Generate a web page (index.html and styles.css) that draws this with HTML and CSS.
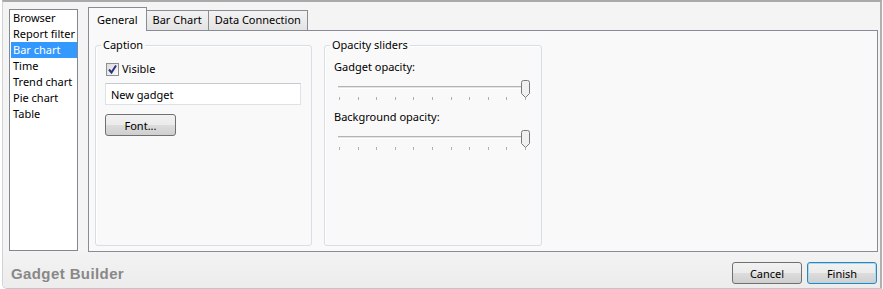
FILE: index.html
```html
<!DOCTYPE html>
<html lang="en">
<head>
    <meta charset="UTF-8">
    <title>Gadget Builder</title>
    <link rel="stylesheet" href="styles.css">
</head>
<body>
    <div class="window">
        <div class="main">
            <ul class="gadget-list">
                <li>Browser</li>
                <li>Report filter</li>
                <li class="selected">Bar chart</li>
                <li>Time</li>
                <li>Trend chart</li>
                <li>Pie chart</li>
                <li>Table</li>
            </ul>
            <div class="tab-control">
                <div class="tabs">
                    <div class="tab active">General</div>
                    <div class="tab">Bar Chart</div>
                    <div class="tab">Data Connection</div>
                </div>
                <div class="tab-panel">
                    <fieldset class="group caption-group">
                        <legend>Caption</legend>
                        <label class="check">
                            <span class="check-box">
                                <svg width="11" height="11" viewBox="0 0 11 11"><path d="M2 5.5 L4.5 8.5 L9 1.5" fill="none" stroke="#2f3480" stroke-width="2"/></svg>
                            </span>
                            Visible
                        </label>
                        <input class="text-input" type="text" value="New gadget">
                        <button class="btn font-btn">Font...</button>
                    </fieldset>
                    <fieldset class="group opacity-group">
                        <legend>Opacity sliders</legend>
                        <div class="slider-label">Gadget opacity:</div>
                        <div class="slider">
                            <div class="track"></div>
                            <div class="ticks">
                                <i></i><i></i><i></i><i></i><i></i><i></i><i></i><i></i><i></i><i></i><i></i>
                            </div>
                            <svg class="thumb" width="9" height="18" viewBox="0 0 9 18"><path d="M0.5 2.5 Q0.5 0.5 2.5 0.5 H6.5 Q8.5 0.5 8.5 2.5 V13.5 L4.5 17.5 L0.5 13.5 Z" fill="#f0f0f0" stroke="#7a7a7a"/></svg>
                        </div>
                        <div class="slider-label">Background opacity:</div>
                        <div class="slider">
                            <div class="track"></div>
                            <div class="ticks">
                                <i></i><i></i><i></i><i></i><i></i><i></i><i></i><i></i><i></i><i></i><i></i>
                            </div>
                            <svg class="thumb" width="9" height="18" viewBox="0 0 9 18"><path d="M0.5 2.5 Q0.5 0.5 2.5 0.5 H6.5 Q8.5 0.5 8.5 2.5 V13.5 L4.5 17.5 L0.5 13.5 Z" fill="#f0f0f0" stroke="#7a7a7a"/></svg>
                        </div>
                    </fieldset>
                </div>
            </div>
        </div>
        <div class="footer">
            <span class="title">Gadget Builder</span>
            <button class="btn">Cancel</button>
            <button class="btn default">Finish</button>
        </div>
    </div>
</body>
</html>
```

FILE: styles.css
```css
* {
    margin: 0;
    padding: 0;
    box-sizing: border-box;
}
body {
    background: #ffffff;
    font-family: "Noto Sans", sans-serif;
    font-size: 11px;
    line-height: 16px;
    color: #000;
}
.window {
    margin-left: 2px;
    width: 880px;
    height: 289px;
    background: #f4f4f4;
    border-top: 2px solid #a9a9a9;
    border-right: 2px solid #b0b0b0;
    border-left: 1px solid #d2d2d2;
    border-bottom: 1px solid #c4c4c4;
    border-bottom-left-radius: 5px;
    display: flex;
    flex-direction: column;
}
.main {
    display: flex;
    gap: 10px;
    padding: 5px 2px 0 6px;
    height: 250px;
}
.gadget-list {
    list-style: none;
    width: 69px;
    height: 242px;
    margin-top: 2px;
    background: white;
    border: 1px solid #828790;
}
.gadget-list li {
    margin-left: 1px;
    padding-left: 2px;
    height: 16px;
    white-space: nowrap;
}
.gadget-list li.selected {
    background: #3399ff;
    color: white;
}
.tab-control {
    flex: 1;
    display: flex;
    flex-direction: column;
}
.tabs {
    display: flex;
    align-items: flex-end;
    height: 23px;
}
.tab {
    height: 20px;
    padding: 1px 6px 0;
    border: 1px solid #898c95;
    border-bottom: none;
    background: linear-gradient(#f3f3f3, #e3e3e3);
    margin-left: -1px;
    white-space: nowrap;
}
.tab.active {
    height: 24px;
    margin-left: 0;
    margin-bottom: -1px;
    padding: 4px 8px 0 8px;
    background: #f9f9f9;
    position: relative;
    z-index: 1;
}
.tab-panel {
    height: 222px;
    border: 1px solid #898c95;
    background: #f9f9f9;
    display: flex;
    gap: 12px;
    padding: 6px 0 5px 6px;
}
.group {
    border: 1px solid #d5dfe5;
    border-radius: 3px;
    padding: 6px 8px 0 8px;
    box-shadow: inset 1px 1px 0 #ffffff;
    height: 209px;
}
.group legend {
    padding: 0 2px;
    margin-left: -3px;
}
.caption-group {
    width: 217px;
}
.opacity-group {
    width: 218px;
}
.check {
    display: flex;
    align-items: center;
    gap: 3px;
    margin: 2px 0 0 2px;
    height: 16px;
}
.check-box {
    width: 13px;
    height: 13px;
    border: 1px solid #8e8f8f;
    background: linear-gradient(135deg, #dcdcdc, #fbfbfb);
    display: flex;
    align-items: center;
    justify-content: center;
}
.text-input {
    display: block;
    width: 196px;
    height: 22px;
    margin: 6px 0 0 1px;
    padding-left: 5px;
    font-family: "Noto Sans", sans-serif;
    font-size: 11px;
    color: #000;
    background: white;
    border: 1px solid #dde2e7;
    border-top-color: #c6cacf;
    outline: none;
}
.btn {
    height: 22px;
    font-family: "Noto Sans", sans-serif;
    font-size: 11px;
    color: #000;
    border: 1px solid #707070;
    border-radius: 3px;
    background: linear-gradient(#f2f2f2 0%, #ebebeb 50%, #dddddd 50%, #cfcfcf 100%);
}
.font-btn {
    display: block;
    width: 71px;
    margin: 9px 0 0 1px;
}
.slider-label {
    padding-left: 1px;
    height: 16px;
}
.slider {
    position: relative;
    margin-left: 5px;
    width: 192px;
    height: 34px;
}
.track {
    position: absolute;
    left: 0;
    right: 5px;
    top: 11px;
    height: 3px;
    border-top: 1px solid #b4b4b4;
    border-bottom: 1px solid #ffffff;
    background: #e4e4e4;
}
.ticks {
    position: absolute;
    left: 1px;
    right: 4px;
    top: 22px;
    height: 3px;
    display: flex;
    justify-content: space-between;
}
.ticks i {
    width: 1px;
    height: 3px;
    background: #b0b0b0;
}
.thumb {
    position: absolute;
    right: 0;
    top: 5px;
}
.footer {
    flex: 1;
    display: flex;
    align-items: flex-start;
    gap: 5px;
    padding: 10px 3px 0 8px;
    background: linear-gradient(#f3f3f3, #ececec);
    border-bottom-left-radius: 5px;
}
.footer .title {
    flex: 1;
    font-family: "Liberation Sans", Arial, sans-serif;
    font-weight: bold;
    font-size: 15px;
    letter-spacing: 0.4px;
    color: #888888;
    line-height: 22px;
    padding-top: 1px;
}
.footer .btn {
    width: 70px;
}
.btn.default {
    border-color: #3c7fb1;
    box-shadow: inset 0 0 0 1px #9fdcf5;
}
```
